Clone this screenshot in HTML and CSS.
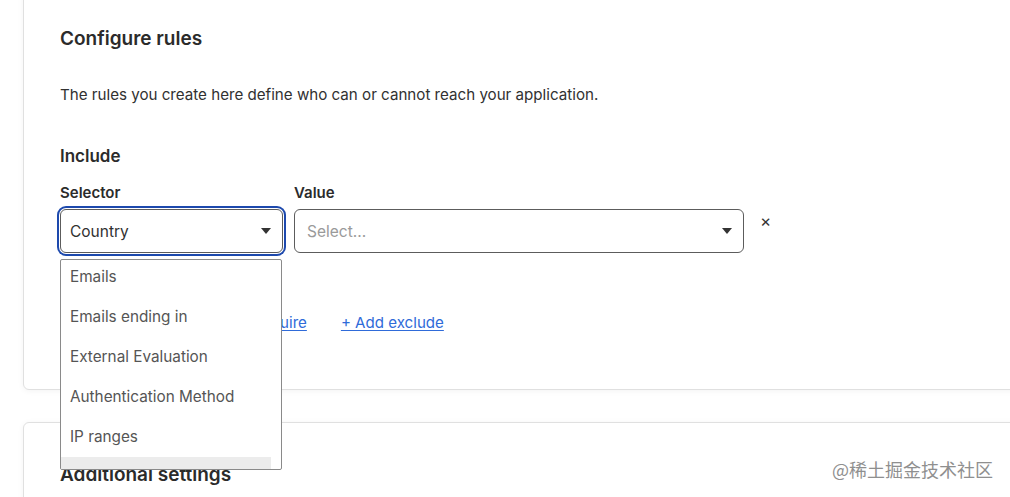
FILE: index.html
```html
<!DOCTYPE html>
<html lang="en">
<head>
    <meta charset="UTF-8">
    <title>Configure rules</title>
    <link rel="stylesheet" href="styles.css">
</head>
<body>
    <div class="page">
        <div class="card rules">
            <h2>Configure rules</h2>
            <p class="intro">The rules you create here define who can or cannot reach your application.</p>

            <h3>Include</h3>
            <div class="rule-row">
                <div class="field selector-field">
                    <label>Selector</label>
                    <div class="select focused">
                        <span>Country</span>
                        <span class="caret"></span>
                    </div>
                    <ul class="dropdown">
                        <li>Emails</li>
                        <li>Emails ending in</li>
                        <li>External Evaluation</li>
                        <li>Authentication Method</li>
                        <li>IP ranges</li>
                        <li class="active"></li>
                    </ul>
                </div>
                <div class="field value-field">
                    <label>Value</label>
                    <div class="select">
                        <span class="placeholder">Select...</span>
                        <span class="caret"></span>
                    </div>
                </div>
                <button class="remove">&times;</button>
            </div>

            <div class="links">
                <a href="#" class="first">+ Add include</a>
                <a href="#">+ Add require</a>
                <a href="#">+ Add exclude</a>
            </div>
        </div>

        <div class="card settings">
            <h2>Additional settings</h2>
        </div>
    </div>

    <div class="watermark">@稀土掘金技术社区</div>
</body>
</html>
```

FILE: styles.css
```css
body {
    margin: 0;
    background-color: #ffffff;
    font-family: Inter, "Noto Sans", sans-serif;
    color: #313131;
    overflow: hidden;
    height: 497px;
}

.page {
    width: 1100px;
    padding-left: 23px;
}

.card {
    background-color: #ffffff;
    border: 1px solid #e0e0e0;
    border-radius: 6px;
    box-shadow: 0 1px 6px rgba(0, 0, 0, 0.05);
    padding: 0 36px;
}

.rules {
    margin-top: -10px;
    padding-top: 36px;
    height: 362px;
}

.settings {
    margin-top: 32px;
    padding-top: 40px;
    height: 100px;
}

h2 {
    margin: 0;
    font-size: 19px;
    line-height: 24px;
    font-weight: 600;
    color: #2b2b2b;
}

.intro {
    margin: 34px 0 0;
    font-size: 15.15px;
    line-height: 20px;
}

h3 {
    margin: 40px 0 0;
    font-size: 17px;
    line-height: 22px;
    font-weight: 600;
    color: #2b2b2b;
}

.rule-row {
    display: flex;
    align-items: flex-start;
    margin-top: 16px;
}

.field {
    display: flex;
    flex-direction: column;
}

.field label {
    font-size: 15px;
    line-height: 20px;
    font-weight: 600;
    color: #2b2b2b;
    margin-bottom: 6px;
}

.selector-field {
    position: relative;
    width: 223px;
}

.value-field {
    width: 450px;
    margin-left: 11px;
}

.select {
    box-sizing: border-box;
    height: 44px;
    border: 1px solid #5c5c5c;
    border-radius: 6px;
    display: flex;
    align-items: center;
    justify-content: space-between;
    padding: 0 10px 0 9px;
    font-size: 15.5px;
    color: #313131;
    background-color: #ffffff;
}

.select.focused {
    box-shadow: 0 0 0 1px #ffffff, 0 0 0 3px #1d49ad;
}

.placeholder {
    color: #9a9a9a;
    padding-left: 3px;
}

.caret {
    width: 0;
    height: 0;
    border-left: 5px solid transparent;
    border-right: 5px solid transparent;
    border-top: 6px solid #333333;
    margin-right: 1px;
}

.remove {
    background: none;
    border: none;
    padding: 0;
    margin: 28px 0 0 16px;
    font-size: 17px;
    line-height: 20px;
    color: #333333;
    font-family: inherit;
}

.links {
    display: flex;
    gap: 34px;
    margin-top: 60px;
    font-size: 15.1px;
    line-height: 20px;
}

.links a {
    color: #2f6bd9;
    text-decoration: underline;
    text-underline-offset: 2px;
}

.links a.first {
    margin-right: 16px;
}

.dropdown {
    position: absolute;
    top: 76px;
    left: 0;
    box-sizing: border-box;
    width: 222px;
    height: 211px;
    margin: 0;
    padding: 0;
    list-style: none;
    border: 1px solid #8a8a8a;
    border-radius: 2px;
    background-color: #ffffff;
    overflow: hidden;
    z-index: 5;
}

.dropdown li {
    height: 40px;
    line-height: 40px;
    padding-left: 9px;
    font-size: 15.3px;
    color: #555555;
}

.dropdown li:first-child {
    margin-top: -3px;
}

.dropdown li.active {
    background-color: #ececec;
    margin-right: 10px;
}

.watermark {
    position: absolute;
    right: 17px;
    bottom: 15px;
    font-family: "Noto Sans CJK SC", sans-serif;
    font-size: 18px;
    color: #8f8f8f;
    text-shadow: 0 0 3px #ffffff;
}
```
